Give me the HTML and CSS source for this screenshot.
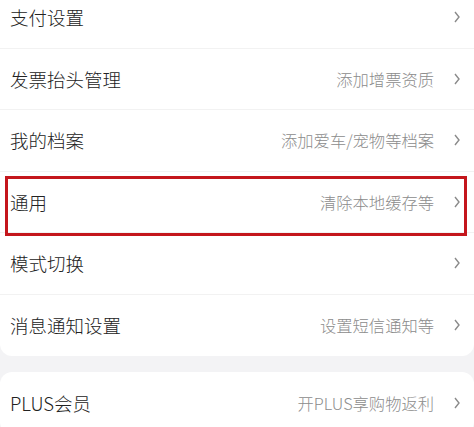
FILE: index.html
```html
<!DOCTYPE html>
<html lang="zh-CN">
<head>
  <meta charset="UTF-8" />
  <meta name="viewport" content="width=device-width, initial-scale=1" />
  <title>设置</title>
  <link rel="stylesheet" href="styles.css">
</head>
<body>
  <main class="ajustes">
    <section class="tarjeta tarjeta-arriba">
      <div class="fila">
        <span class="titulo">支付设置</span>
        <span class="extra"></span>
        <svg class="flecha" viewBox="0 0 6 12"><path d="M1 1 L5 6 L1 11" /></svg>
      </div>
      <div class="fila">
        <span class="titulo">发票抬头管理</span>
        <span class="extra">添加增票资质</span>
        <svg class="flecha" viewBox="0 0 6 12"><path d="M1 1 L5 6 L1 11" /></svg>
      </div>
      <div class="fila">
        <span class="titulo">我的档案</span>
        <span class="extra">添加爱车/宠物等档案</span>
        <svg class="flecha" viewBox="0 0 6 12"><path d="M1 1 L5 6 L1 11" /></svg>
      </div>
      <div class="fila marcada">
        <span class="titulo">通用</span>
        <span class="extra">清除本地缓存等</span>
        <svg class="flecha" viewBox="0 0 6 12"><path d="M1 1 L5 6 L1 11" /></svg>
        <span class="marco"></span>
      </div>
      <div class="fila">
        <span class="titulo">模式切换</span>
        <span class="extra"></span>
        <svg class="flecha" viewBox="0 0 6 12"><path d="M1 1 L5 6 L1 11" /></svg>
      </div>
      <div class="fila ultima">
        <span class="titulo">消息通知设置</span>
        <span class="extra">设置短信通知等</span>
        <svg class="flecha" viewBox="0 0 6 12"><path d="M1 1 L5 6 L1 11" /></svg>
      </div>
    </section>

    <section class="tarjeta">
      <div class="fila ultima">
        <span class="titulo">PLUS会员</span>
        <span class="extra">开PLUS享购物返利</span>
        <svg class="flecha" viewBox="0 0 6 12"><path d="M1 1 L5 6 L1 11" /></svg>
      </div>
    </section>
  </main>
</body>
</html>
```

FILE: styles.css
```css
body {
  margin: 0;
  padding: 0;
  background: #f3f3f5;
  font-family: "Noto Sans CJK SC", "Noto Sans", sans-serif;
  overflow: hidden;
}
.ajustes {
  display: flex;
  flex-direction: column;
  gap: 16px;
}
.tarjeta {
  background: white;
  border-radius: 12px;
}
/* la lista ya esta desplazada hacia arriba */
.tarjeta-arriba {
  margin-top: -13px;
  border-radius: 0 0 12px 12px;
}
.fila {
  position: relative;
  display: flex;
  align-items: center;
  height: 61.5px;
  box-sizing: border-box;
  padding: 0 14px 0 10px;
  border-bottom: 1px solid #f2f2f2;
}
.fila.ultima {
  border-bottom: none;
}
.titulo {
  flex: 1;
  font-size: 18.5px;
  font-weight: 300;
  color: #222;
}
.extra {
  font-size: 16.3px;
  font-weight: 300;
  color: #8c8c8c;
  margin-right: 20px;
}
.flecha {
  width: 6px;
  height: 12px;
  fill: none;
  stroke: #8a8a8a;
  stroke-width: 1.4;
}
.marco {
  position: absolute;
  left: 5px;
  top: 4.5px;
  width: 462px;
  height: 60px;
  box-sizing: border-box;
  border: 3px solid #c4161c;
}
```
